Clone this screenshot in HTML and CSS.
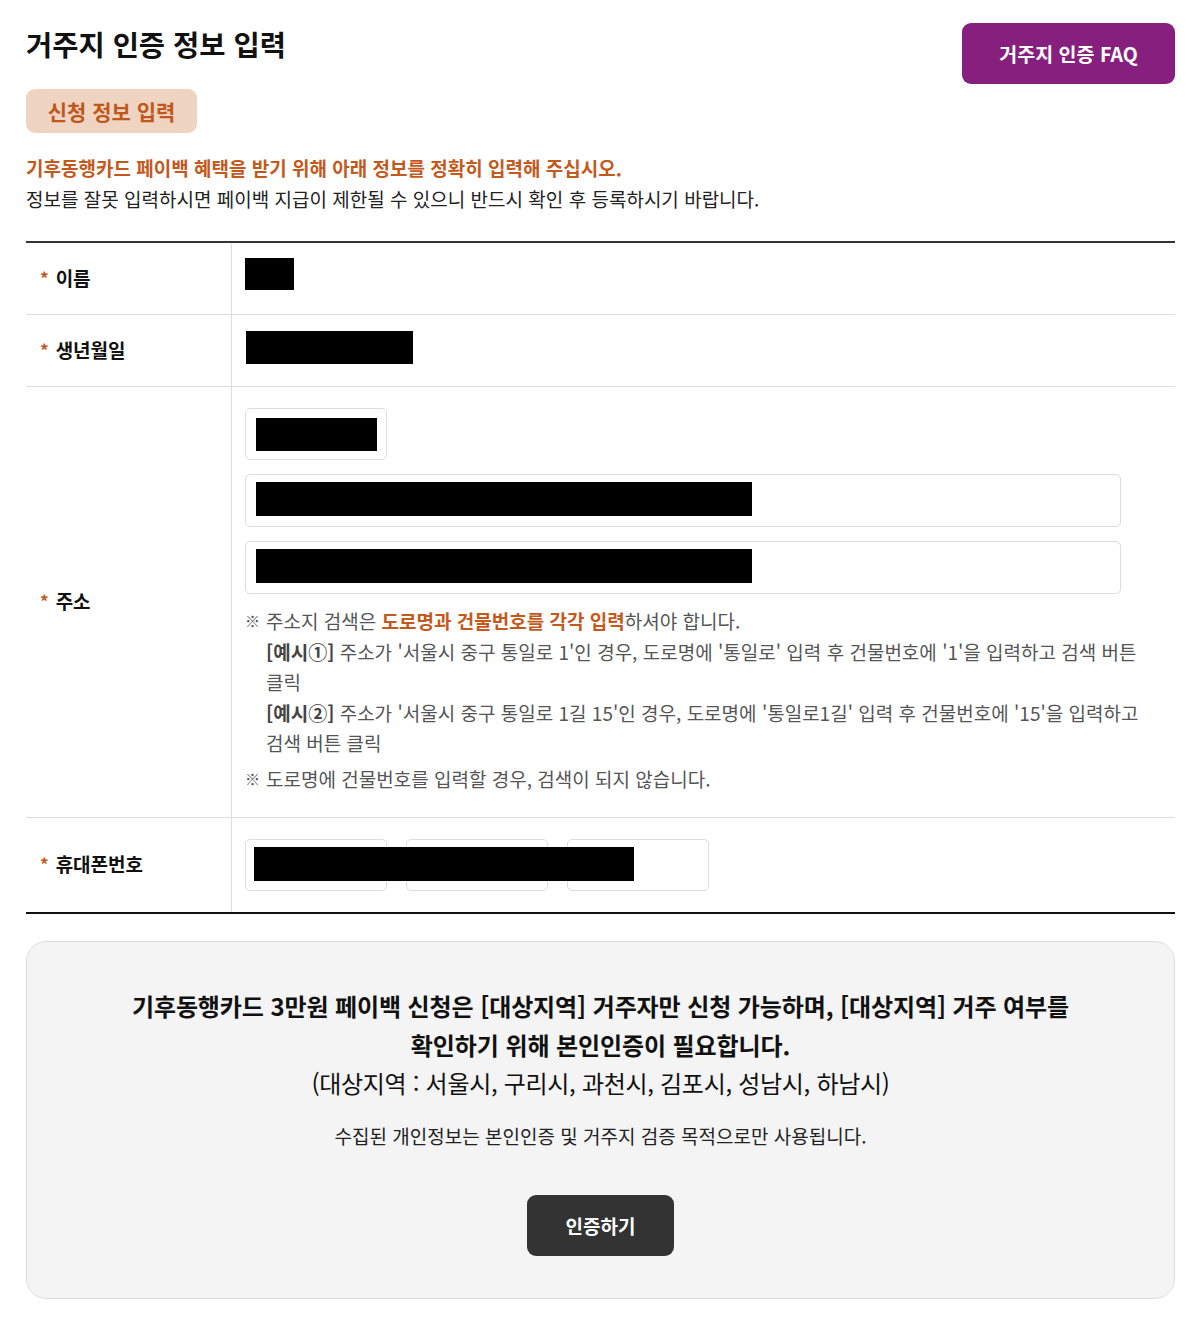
FILE: index.html
```html
<!DOCTYPE html>
<html lang="ko">
<head>
<meta charset="utf-8">
<title>거주지 인증 정보 입력</title>
<link rel="stylesheet" href="styles.css">
</head>
<body>
<div class="page">
  <header class="header">
    <h1 class="title">거주지 인증 정보 입력</h1>
    <a class="faq-btn" href="#">거주지 인증 FAQ</a>
  </header>
  <div class="tag">신청 정보 입력</div>
  <p class="intro-strong">기후동행카드 페이백 혜택을 받기 위해 아래 정보를 정확히 입력해 주십시오.</p>
  <p class="intro">정보를 잘못 입력하시면 페이백 지급이 제한될 수 있으니 반드시 확인 후 등록하시기 바랍니다.</p>

  <div class="form">
    <div class="row row-name">
      <div class="label"><span class="req">*</span>이름</div>
      <div class="value"><div class="redact redact-name"></div></div>
    </div>
    <div class="row row-birth">
      <div class="label"><span class="req">*</span>생년월일</div>
      <div class="value"><div class="redact redact-birth"></div></div>
    </div>
    <div class="row row-addr">
      <div class="label"><span class="req">*</span>주소</div>
      <div class="value">
        <div class="input input-zip"><div class="redact redact-zip"></div></div>
        <div class="input input-wide"><div class="redact redact-addr"></div></div>
        <div class="input input-wide"><div class="redact redact-addr"></div></div>
        <ul class="notes">
          <li>
            <span class="mark">※</span>
            <div class="note-body">
              <p>주소지 검색은 <strong class="hl">도로명과 건물번호를 각각 입력</strong>하셔야 합니다.</p>
              <p><strong class="ex">[예시①]</strong> <span>주소가 '서울시 중구 통일로 1'인 경우, 도로명에 '통일로' 입력 후 건물번호에 '1'을 입력하고 검색 버튼</span> <span>클릭</span></p>
              <p><strong class="ex">[예시②]</strong> <span>주소가 '서울시 중구 통일로 1길 15'인 경우, 도로명에 '통일로1길' 입력 후 건물번호에 '15'을 입력하고</span> <span>검색 버튼 클릭</span></p>
            </div>
          </li>
          <li>
            <span class="mark">※</span>
            <div class="note-body"><p>도로명에 건물번호를 입력할 경우, 검색이 되지 않습니다.</p></div>
          </li>
        </ul>
      </div>
    </div>
    <div class="row row-phone">
      <div class="label"><span class="req">*</span>휴대폰번호</div>
      <div class="value">
        <div class="phone">
          <div class="input input-phone"></div>
          <div class="input input-phone"></div>
          <div class="input input-phone"></div>
          <div class="redact redact-phone"></div>
        </div>
      </div>
    </div>
  </div>

  <section class="verify">
    <p class="verify-strong">기후동행카드 3만원 페이백 신청은 [대상지역] 거주자만 신청 가능하며, [대상지역] 거주 여부를<br>확인하기 위해 본인인증이 필요합니다.</p>
    <p class="verify-area">(대상지역 : 서울시, 구리시, 과천시, 김포시, 성남시, 하남시)</p>
    <p class="verify-note">수집된 개인정보는 본인인증 및 거주지 검증 목적으로만 사용됩니다.</p>
    <button class="verify-btn" type="button">인증하기</button>
  </section>
</div>
</body>
</html>
```
FILE: styles.css
```css
* { box-sizing: border-box; }
html, body { margin: 0; padding: 0; background: #fff; }
body {
  font-family: "Noto Sans CJK KR", "Noto Sans", sans-serif;
  color: #222;
}
p { margin: 0; }

.page {
  width: 1200px;
  padding: 23px 25px 0 26px;
}

.header {
  display: flex;
  justify-content: space-between;
  align-items: flex-start;
  height: 61px;
}
.title {
  margin: 2px 0 0;
  font-size: 28.5px;
  line-height: 38px;
  font-weight: 700;
  color: #111;
}
.faq-btn {
  display: flex;
  align-items: center;
  justify-content: center;
  width: 213px;
  height: 61px;
  background: #861f7e;
  border-radius: 9px;
  color: #fff;
  font-size: 19.5px;
  font-weight: 700;
  text-decoration: none;
}

.tag {
  display: inline-flex;
  align-items: center;
  justify-content: center;
  margin-top: 5px;
  width: 171px;
  height: 44px;
  background: #efd4c2;
  border-radius: 9px;
  color: #c0581d;
  font-size: 21px;
  font-weight: 700;
}

.intro-strong {
  margin-top: 19px;
  font-size: 19px;
  line-height: 31px;
  font-weight: 700;
  color: #c4591c;
}
.intro {
  font-size: 19px;
  line-height: 31px;
  color: #222;
}

.form {
  margin-top: 27px;
  border-top: 2px solid #333;
  border-bottom: 2px solid #111;
}
.row {
  display: grid;
  grid-template-columns: 206px 1fr;
  border-bottom: 1px solid #ddd;
}
.row:last-child { border-bottom: none; }
.label {
  display: flex;
  align-items: center;
  padding-left: 14px;
  padding-bottom: 3px;
  border-right: 1px solid #ddd;
  font-size: 19px;
  font-weight: 700;
  color: #111;
}
.req {
  color: #c4591c;
  margin-right: 7px;
  font-size: 17px;
}
.value {
  padding: 0 25px 0 13px;
}

.redact { background: #000; }

.row-name .value { padding-top: 15px; padding-bottom: 24px; }
.redact-name { width: 49px; height: 32px; }

.row-birth .value { padding-top: 16px; padding-bottom: 22px; }
.redact-birth { width: 167px; height: 33px; margin-left: 1px; }

.row-addr .value { padding-top: 21px; padding-bottom: 23px; }
.input {
  background: #fff;
  border: 1px solid #ddd;
  border-radius: 5px;
}
.input-zip {
  width: 142px;
  height: 52px;
  padding: 9px 10px;
}
.redact-zip { width: 121px; height: 33px; }
.input-wide {
  width: 876px;
  height: 53px;
  margin-top: 14px;
  padding: 7px 10px;
}
.redact-addr { width: 496px; height: 34px; }

.notes {
  list-style: none;
  margin: 12px 0 0;
  padding: 0;
  width: 904px;
  color: #555;
  font-size: 19px;
}
.notes li {
  display: flex;
  margin-bottom: 5px;
}
.notes li:last-child { margin-bottom: 0; }
.mark {
  flex: 0 0 21px;
  font-size: 15px;
  font-weight: 700;
  line-height: 30.5px;
  color: #555;
}
.note-body p { line-height: 30.5px; }
.hl { color: #c4591c; font-weight: 700; }
.ex { color: #444; font-weight: 700; }

.row-phone .value { padding-top: 21px; padding-bottom: 21px; }
.phone {
  position: relative;
  display: flex;
  gap: 19px;
}
.input-phone { width: 142px; height: 52px; }
.redact-phone {
  position: absolute;
  left: 9px;
  top: 8px;
  width: 380px;
  height: 34px;
}

.verify {
  margin-top: 27px;
  background: #f4f4f4;
  border: 1px solid #ddd;
  border-radius: 20px;
  padding: 44px 20px 42px;
  text-align: center;
  color: #111;
}
.verify-strong {
  font-size: 24px;
  line-height: 39px;
  font-weight: 700;
  letter-spacing: -0.1px;
}
.verify-area {
  font-size: 24px;
  line-height: 38px;
  letter-spacing: -0.3px;
}
.verify-note {
  margin-top: 21px;
  font-size: 19px;
  line-height: 26px;
  color: #222;
}
.verify-btn {
  margin-top: 46px;
  width: 147px;
  height: 61px;
  border: none;
  border-radius: 9px;
  background: #333;
  color: #fff;
  font-family: inherit;
  font-size: 19px;
  font-weight: 700;
}
```
